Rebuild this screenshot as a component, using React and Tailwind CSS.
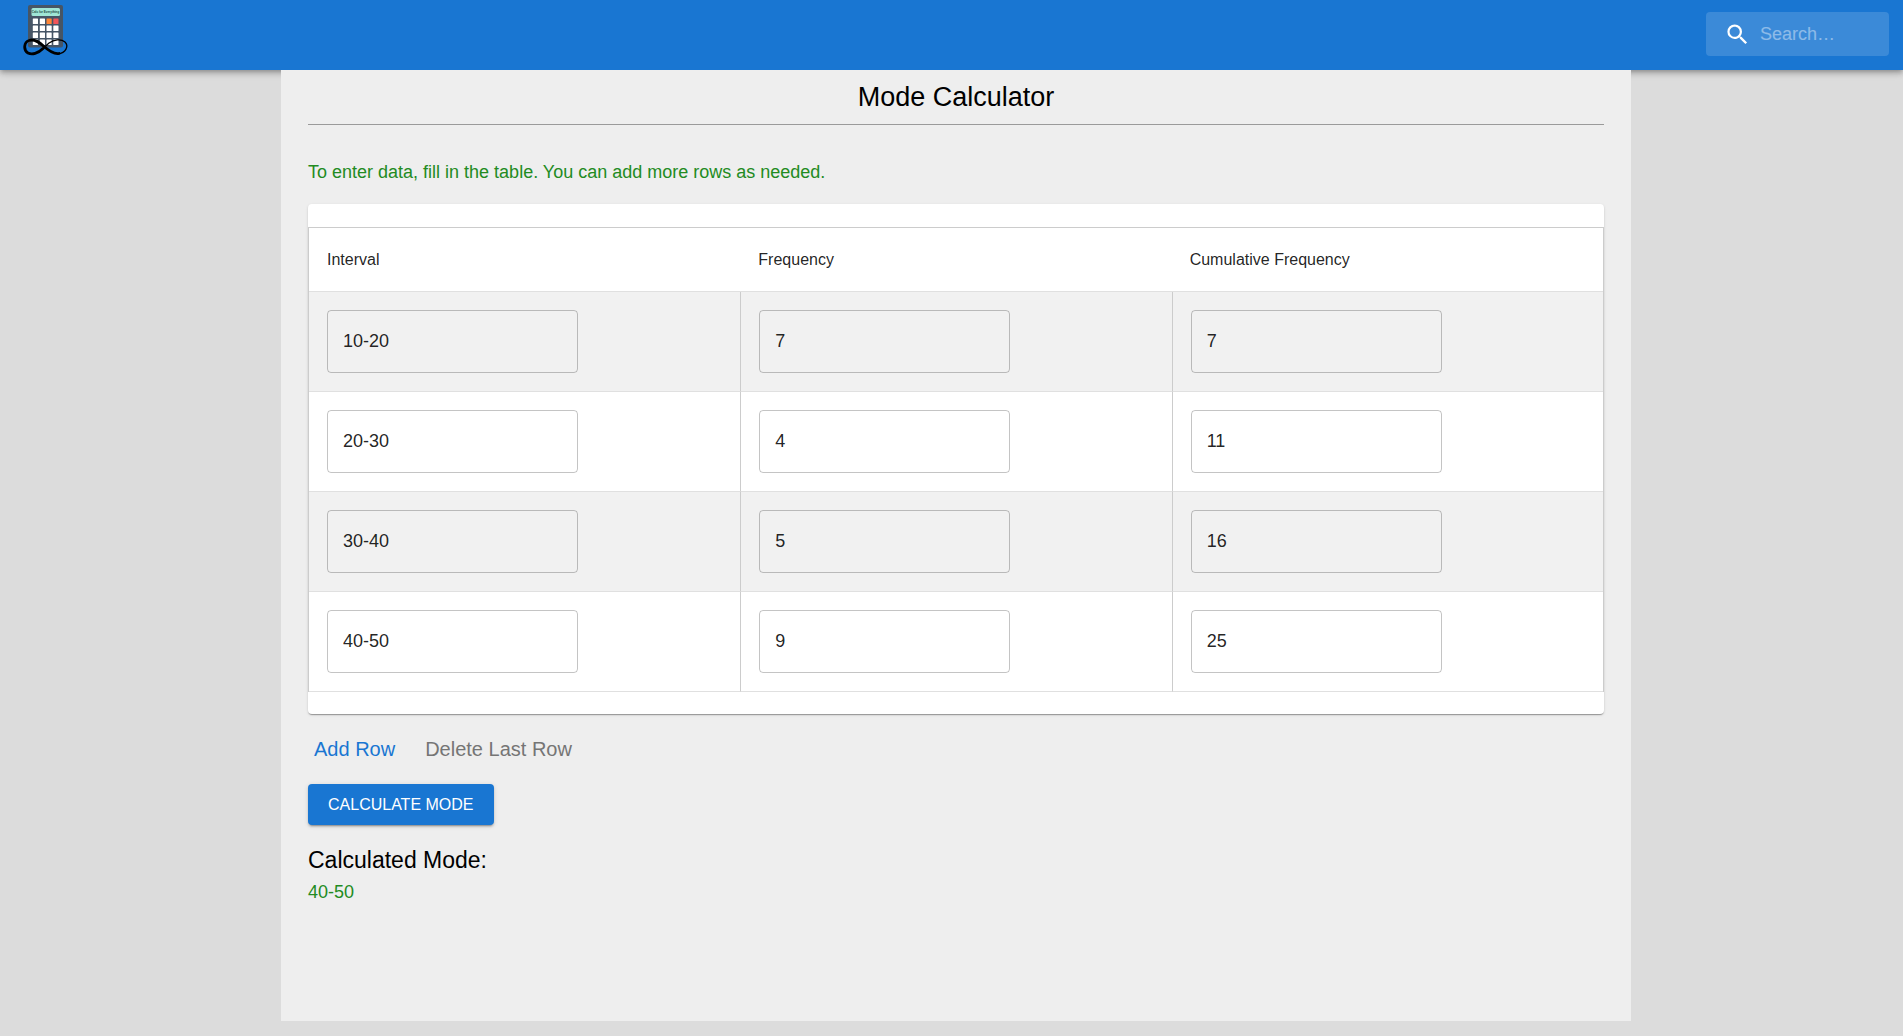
import React, { useState } from "react";
import { MdSearch } from "react-icons/md";

const COLUMNS = [
  { key: "interval", label: "Interval" },
  { key: "frequency", label: "Frequency" },
  { key: "cumulative", label: "Cumulative Frequency" },
];

const INITIAL_ROWS = [
  { interval: "10-20", frequency: "7", cumulative: "7" },
  { interval: "20-30", frequency: "4", cumulative: "11" },
  { interval: "30-40", frequency: "5", cumulative: "16" },
  { interval: "40-50", frequency: "9", cumulative: "25" },
];

const Logo = () => (
  <svg width="46" height="57" viewBox="0 0 46 57" aria-hidden="true">
    <rect x="5" y="5" width="35" height="42.5" rx="2" fill="#465566" />
    <rect x="8.5" y="8" width="28.5" height="8" rx="1.5" fill="#a0e6d6" />
    <text
      x="22.5"
      y="13"
      fontSize="3"
      fontWeight="bold"
      textAnchor="middle"
      fill="#23483f"
    >
      Calc for Everything
    </text>
    {[18.5, 25.5, 32.5, 39.5].map((y, row) =>
      [9.8, 16.8, 23.5, 30.3].map((x, col) => (
        <rect
          key={`${x}-${y}`}
          x={x}
          y={y}
          width="5.2"
          height="5.5"
          rx="0.5"
          fill={row === 0 && col === 2 ? "#ff8637" : row === 0 && col === 3 ? "#f2555a" : "#fff"}
        />
      ))
    )}
    {/* infinity sign, heavy stroke on the left loop and thin on the right */}
    <path
      d="M20 48.5 C15 53.5 9 55 5 53 C0 50 1 42 6 40.5 C11 38.5 16 42 20.500 46 C26 51 31 54.500 36 53.500"
      fill="none"
      stroke="#000"
      strokeWidth="2.8"
      strokeLinecap="round"
    />
    <path
      d="M35 53.800 C43 53 46 46 42 42 C38 38.500 31 39.500 26 43 L19 49.500"
      fill="none"
      stroke="#000"
      strokeWidth="1.3"
      strokeLinecap="round"
    />
  </svg>
);

const Header = () => (
  <header className="flex h-[70px] items-start justify-between bg-[#1976d2] pl-[23px] pr-[14px] shadow-[0_2px_4px_-1px_rgba(0,0,0,0.2),0_4px_5px_0_rgba(0,0,0,0.14),0_1px_10px_0_rgba(0,0,0,0.12)]">
    <a href="#" aria-label="Home">
      <Logo />
    </a>
    <label className="mt-3 flex h-11 w-[183px] items-center gap-[9px] rounded bg-white/15 pl-[18px] text-white">
      <MdSearch size={27} className="shrink-0" />
      <input
        type="search"
        aria-label="search"
        placeholder="Search…"
        className="w-full min-w-0 bg-transparent text-[18px] outline-none placeholder:text-white/42"
      />
    </label>
  </header>
);

const DataTable = ({ rows, onChange }) => (
  <div className="rounded bg-white pt-[23px] pb-[22px] shadow-[0_2px_1px_-1px_rgba(0,0,0,0.2),0_1px_1px_0_rgba(0,0,0,0.14),0_1px_3px_0_rgba(0,0,0,0.12)]">
    <table className="w-full table-fixed border-separate border-spacing-0 border-x border-t border-[#cccccc]">
      <thead>
        <tr className="h-16">
          {COLUMNS.map((col) => (
            <th
              key={col.key}
              scope="col"
              className="border-b border-[#e0e0e0] px-[18px] text-left text-base font-normal text-black/87"
            >
              {col.label}
            </th>
          ))}
        </tr>
      </thead>
      <tbody>
        {rows.map((row, index) => (
          <tr key={index} className="h-[100px] odd:bg-[#f1f1f1]">
            {COLUMNS.map((col) => (
              <td
                key={col.key}
                className="border-b border-l border-b-[#e0e0e0] border-l-[#cccccc] px-[18px] first:border-l-0"
              >
                <input
                  type="text"
                  aria-label={`${col.label} ${index + 1}`}
                  value={row[col.key]}
                  onChange={(e) => onChange(index, col.key, e.target.value)}
                  className="block h-[63px] w-[251px] rounded border border-black/23 bg-transparent px-[15px] text-[18px] text-black/87 outline-none"
                />
              </td>
            ))}
          </tr>
        ))}
      </tbody>
    </table>
  </div>
);

const App = () => {
  const [rows, setRows] = useState(INITIAL_ROWS);
  const [mode, setMode] = useState("40-50");

  const handleChange = (index, key, value) => {
    setRows(rows.map((row, i) => (i === index ? { ...row, [key]: value } : row)));
  };

  const addRow = () => {
    setRows([...rows, { interval: "", frequency: "", cumulative: "" }]);
  };

  const deleteRow = () => {
    if (rows.length > 1) setRows(rows.slice(0, -1));
  };

  const calculateMode = () => {
    const top = rows.reduce((best, row) =>
      Number(row.frequency) > Number(best.frequency) ? row : best
    );
    setMode(top.interval);
  };

  return (
    <div className="min-h-screen bg-[#dcdcdc] pb-[15px] font-['Liberation_Sans',Arial,sans-serif]">
      <Header />
      <div className="grid grid-cols-[281px_1fr_272px]">
        <main className="relative col-start-2 min-h-[951px] bg-[#eeeeee] px-[27px] pt-[9px]">
          <h1 className="text-center text-[27px] leading-9 text-black">Mode Calculator</h1>
          <hr className="mt-[9px] border-[#9a9a9a]" />
          <p className="mt-8 mb-[17px] text-[18px] leading-[30px] text-[#228b22]">
            To enter data, fill in the table. You can add more rows as needed.
          </p>

          <DataTable rows={rows} onChange={handleChange} />

          <div className="mt-5 flex gap-[30px] px-[6px] text-xl leading-[30px]">
            <button type="button" onClick={addRow} className="text-[#1976d2]">
              Add Row
            </button>
            <button type="button" onClick={deleteRow} className="text-[#757575]">
              Delete Last Row
            </button>
          </div>

          <button
            type="button"
            onClick={calculateMode}
            className="mt-5 block h-[41px] rounded bg-[#1976d2] px-5 text-base text-white uppercase shadow-[0_3px_1px_-2px_rgba(0,0,0,0.2),0_2px_2px_0_rgba(0,0,0,0.14),0_1px_5px_0_rgba(0,0,0,0.12)]"
          >
            Calculate Mode
          </button>

          <h2 className="mt-[17px] text-[23px] leading-9 text-black">Calculated Mode:</h2>
          <p className="text-[18px] leading-7 text-[#228b22]">{mode}</p>
        </main>
      </div>
    </div>
  );
};

export default App;
